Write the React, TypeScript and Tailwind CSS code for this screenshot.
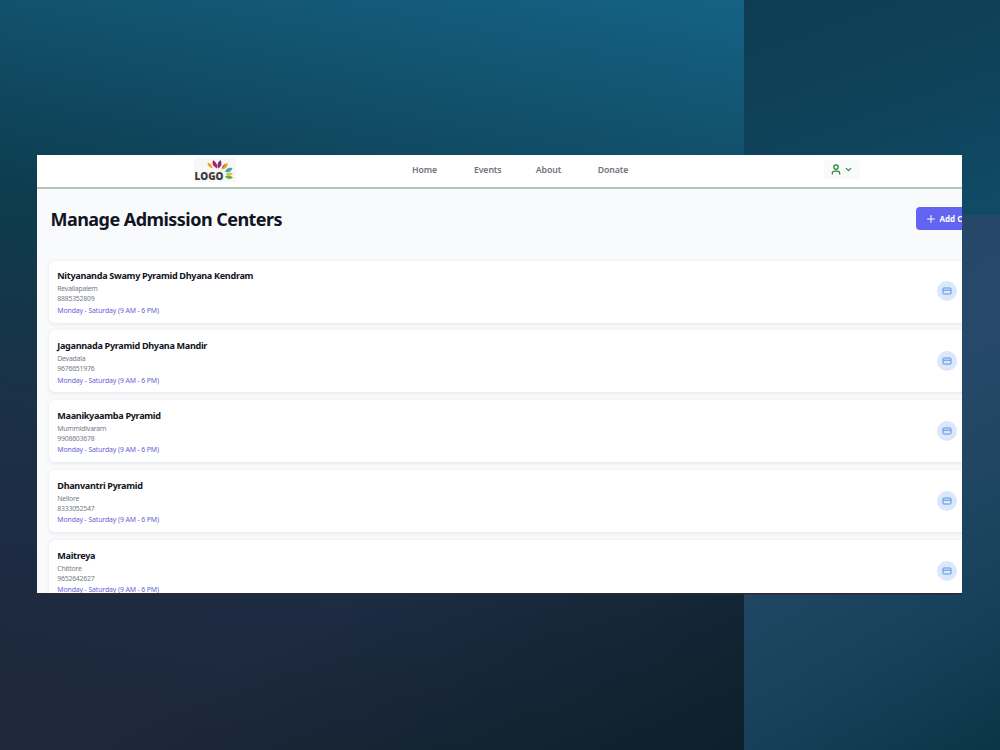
import { ChevronDown, Plus } from "lucide-react";

const links = ["Home", "Events", "About", "Donate"];

const centers = [
  { name: "Nityananda Swamy Pyramid Dhyana Kendram", place: "Revallapalem", phone: "8885352809" },
  { name: "Jagannada Pyramid Dhyana Mandir", place: "Devadala", phone: "9676651976" },
  { name: "Maanikyaamba Pyramid", place: "Mummidivaram", phone: "9908603678" },
  { name: "Dhanvantri Pyramid", place: "Nellore", phone: "8333052547" },
  { name: "Maitreya", place: "Chittore", phone: "9652642627" },
];

function Logo() {
  return (
    <svg viewBox="0 0 42 24" className="h-6 w-[42px]" aria-label="Logo">
      <rect width="42" height="24" fill="#f7f7f7" />
      <path d="M18.500 10.500 Q13.500 9 13.500 4.500 Q18.500 5.500 18.500 10.500Z" fill="#eaa32a" />
      <path d="M23 10.500 Q17 7.500 19 2 Q24 5 23 10.500Z" fill="#b81a62" />
      <path d="M24 10.500 Q22 5.500 26.500 2 Q29.500 7 24 10.500Z" fill="#74307f" />
      <path d="M27.500 11.500 Q28 6 34 5 Q33.500 11 27.500 11.500Z" fill="#e0ae2a" />
      <path d="M27.800 10.500 Q28 7.500 31 5.800 Q31.500 8.500 27.800 10.500Z" fill="#cf6a35" />
      <path d="M31 14.200 Q32.500 9 38.500 10 Q37 15 31 14.200Z" fill="#469fb5" />
      <path d="M31.500 16.200 Q35 13 39 16 Q35 19 31.500 16.200Z" fill="#c6ce36" />
      <path d="M31 18.500 Q35.500 16 39 19.500 Q34.500 23 31 18.500Z" fill="#6fae38" />
      <text x="0.500" y="21.500" textLength="29" lengthAdjust="spacingAndGlyphs" fontFamily="Open Sans, sans-serif" fontSize="9.800" fontWeight="800" fill="#3d3b3d">LOGO</text>
    </svg>
  );
}

function UserIcon() {
  return (
    <svg viewBox="0 0 10 11" className="h-[11px] w-2.5" fill="none" stroke="currentColor" strokeWidth="1.25" strokeLinecap="round">
      <circle cx="5" cy="3.100" r="2.200" />
      <path d="M1.300 10V9.300A2.300 2.300 0 0 1 3.600 7H6.400A2.300 2.300 0 0 1 8.700 9.300V10" />
    </svg>
  );
}

function CardIcon() {
  return (
    <svg viewBox="0 0 10 8" className="h-2 w-2.5" fill="none" stroke="currentColor" strokeWidth="1">
      <rect x="1" y="1" width="8" height="6" rx="0.800" />
      <path d="M1 3.200H9" />
    </svg>
  );
}

export default function App() {
  return (
    <div className="relative h-[750px] w-[1000px] overflow-hidden font-['Noto_Sans',sans-serif]">
      <div className="absolute inset-0 flex">
        <div className="w-[744px] bg-[linear-gradient(150deg,rgba(12,31,41,0)_68%,rgba(12,31,41,0.95)_100%),linear-gradient(191deg,#156285_0%,#12526d_16%,#0d3c4f_37%,#1a3146_60%,#1d2b43_76%,#1d283b_93%)]" />
        <div className="flex flex-1 flex-col">
          <div className="h-[215px] bg-[linear-gradient(160deg,#0e3d52_0%,#0f4159_45%,#104b66_100%)]" />
          <div className="flex-1 bg-[linear-gradient(150deg,#264868_0%,#264969_38%,#204663_55%,#17415a_76%,#0a3547_100%)]" />
        </div>
      </div>

      <main className="absolute left-[37px] top-[155px] h-[438px] w-[925px] overflow-hidden bg-[#f9fafc] shadow-[0_1.5px_0_#2c2930]">
        <header className="flex h-[34px] items-start border-b-2 border-[#b3c6b9] bg-white">
          <div className="ml-[157px] mt-[3px]"><Logo /></div>
          <nav className="ml-[176px] mt-px flex h-[30px] items-center text-[8.750px] font-semibold tracking-[-0.1px] text-[#70737d]">
            {links.map((link) => (
              <a key={link} className="w-[61.900px] whitespace-nowrap">{link}</a>
            ))}
          </nav>
          <button className="ml-[164px] mt-[5px] flex h-[19px] w-[36px] items-center justify-center gap-[3px] rounded-[3px] bg-[#f9fafc] text-[#258535]">
            <UserIcon />
            <ChevronDown size={9} strokeWidth={3} />
          </button>
        </header>

        <div className="flex h-[71.500px] w-[1010px] items-start justify-between pl-[13.500px]">
          <h1 className="mt-[17px] whitespace-nowrap text-[18px] font-bold leading-[26px] tracking-[-0.54px] text-[#111422]">Manage Admission Centers</h1>
          <button className="mr-[35px] mt-[18px] flex h-[23px] w-[96px] items-center whitespace-nowrap rounded-[4px] bg-[#6364f1] pl-[8.500px] text-[8px] font-bold text-white">
            <Plus size={12} strokeWidth={2} className="mr-[3px]" />
            Add Center
          </button>
        </div>

        <section className="ml-[12px] flex w-[950px] flex-col gap-[7.900px]">
          {centers.map((center) => (
            <article key={center.name} className="flex h-[62px] shrink-0 items-center rounded-[6px] bg-white pl-[8.300px] shadow-[0_1px_4px_rgba(30,40,70,0.1)]">
              <div className="w-[880px] whitespace-nowrap pt-[1.800px] text-[6.900px] leading-[10.200px] tracking-[-0.23px] text-[#777b84]">
                <h2 className="text-[9.100px] font-bold leading-[14px] tracking-[-0.32px] text-[#111422]">{center.name}</h2>
                <p className="mt-[1px]">{center.place}</p>
                <p>{center.phone}</p>
                <p className="mt-[1.300px] tracking-[-0.11px] text-[#6864d4]">Monday - Saturday (9 AM - 6 PM)</p>
              </div>
              <button className="-mt-px flex size-5 items-center justify-center rounded-full bg-[#dbe8fb] text-[#5591e3]">
                <CardIcon />
              </button>
            </article>
          ))}
        </section>
      </main>
    </div>
  );
}
